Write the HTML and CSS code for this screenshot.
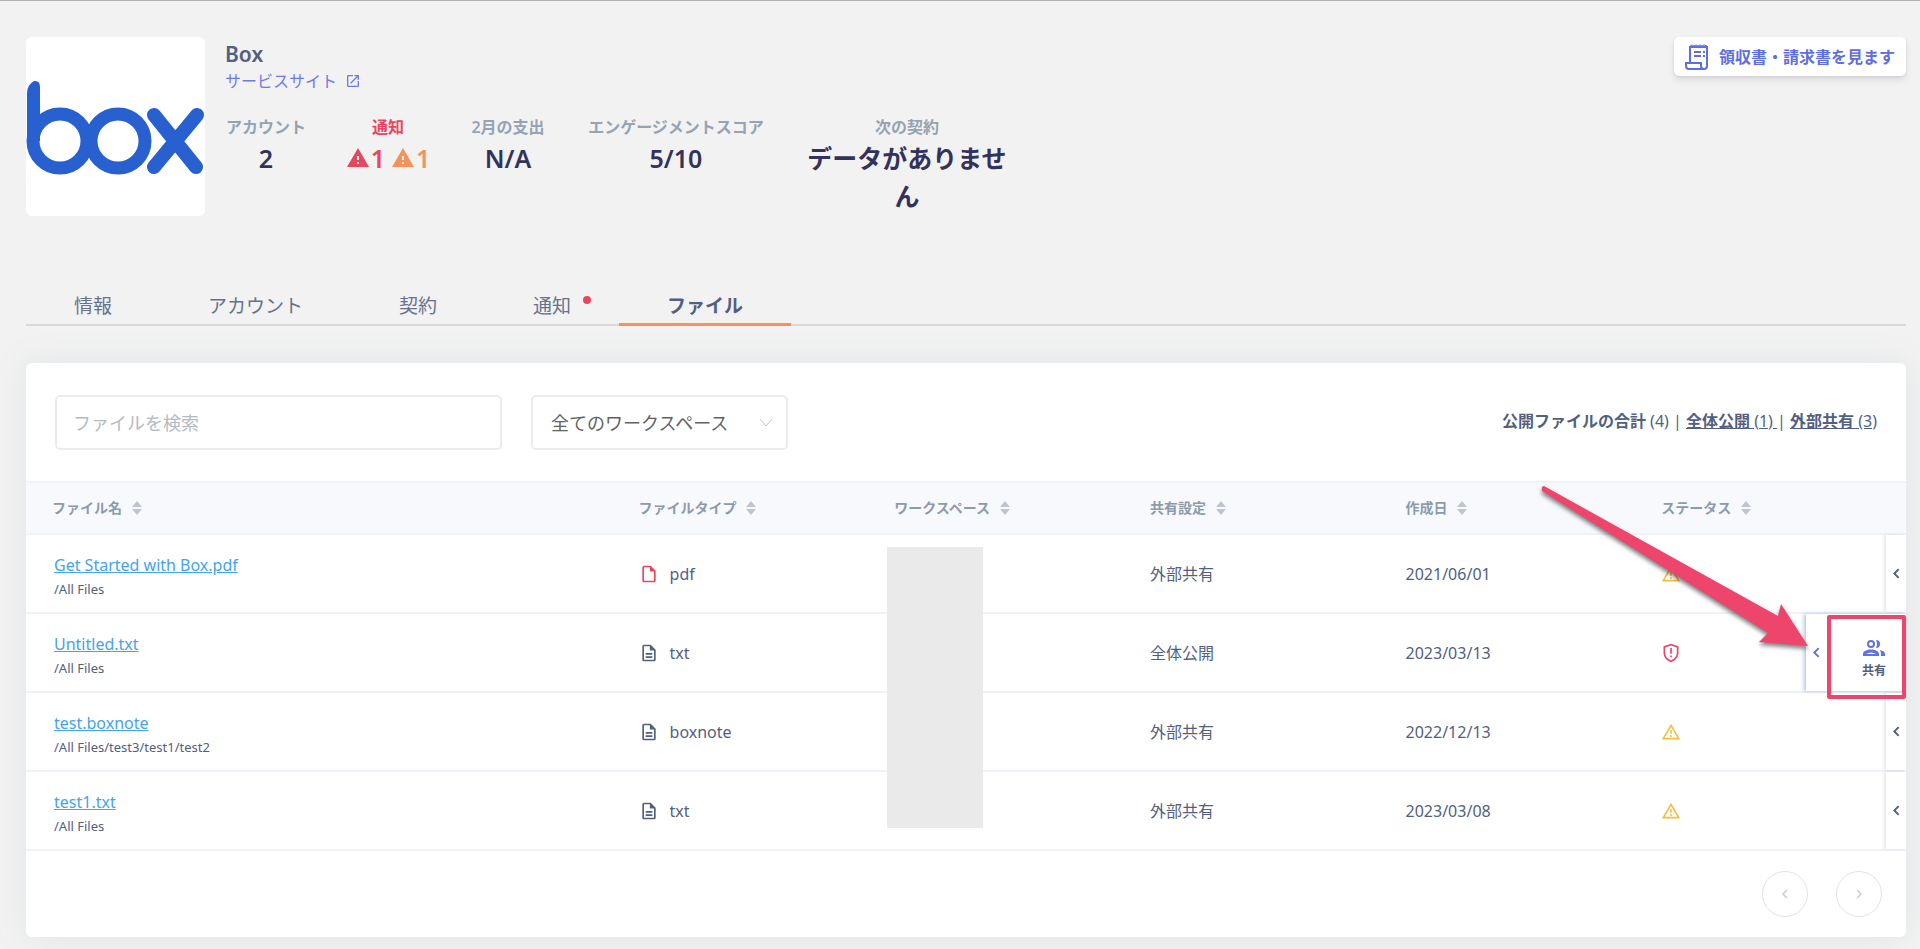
FILE: index.html
```html
<!DOCTYPE html>
<html lang="ja">
<head>
    <meta charset="UTF-8">
    <meta name="viewport" content="width=device-width, initial-scale=1.0">
    <title>Box</title>
    <link rel="stylesheet" href="styles.css">
</head>
<body>
<!-- shared icons -->
<svg class="sprite" aria-hidden="true">
    <symbol id="i-file" viewBox="0 0 24 24"><path d="M14 2H6c-1.100 0-1.990.9-1.990 2L4 20c0 1.100.89 2 1.990 2H18c1.100 0 2-.9 2-2V8l-6-6zM6 20V4h7v5h5v11H6z"/></symbol>
    <symbol id="i-doc" viewBox="0 0 24 24"><path d="M8 16h8v2H8zm0-4h8v2H8zm6-10H6c-1.100 0-2 .9-2 2v16c0 1.100.89 2 1.990 2H18c1.100 0 2-.9 2-2V8l-6-6zm4 18H6V4h7v5h5v11z"/></symbol>
    <symbol id="i-warn" viewBox="0 0 24 24"><path d="M1 21h22L12 2 1 21zm12-3h-2v-2h2v2zm0-4h-2v-4h2v4z"/></symbol>
    <symbol id="i-warn-o" viewBox="0 0 24 24"><path d="M12 6l7.500 13h-15L12 6m0-4L1 21h22L12 2zm1 14h-2v2h2v-2zm0-6h-2v4h2v-4z"/></symbol>
    <symbol id="i-shield" viewBox="0 0 24 24"><path d="M12 1L3 4v7.500c0 5.600 3.800 9.900 9 11.500 5.200-1.600 9-5.900 9-11.500V4l-9-3zm7 10.500c0 4.500-2.900 7.900-7 9.400-4.100-1.500-7-4.900-7-9.400V5.500l7-2.400 7 2.400v6zM11 6h2v7h-2zm0 9h2v2h-2z"/></symbol>
    <symbol id="i-left" viewBox="0 0 24 24"><path d="M16 4l-8 8 8 8" fill="none" stroke="currentColor" stroke-width="3.500"/></symbol>
    <symbol id="i-right" viewBox="0 0 24 24"><path d="M8 4l8 8-8 8" fill="none" stroke="currentColor" stroke-width="3.500"/></symbol>
    <symbol id="i-sort" viewBox="0 0 10 14"><path d="M5 0l5 6H0zM0 8h10l-5 6z"/></symbol>
</svg>

<div class="page">
    <header class="top">
        <div class="logo">
            <svg viewBox="0 0 179 179" aria-label="box" role="img">
                <path d="M1 104V56q0-8 7-12 6-1 6 6v54z" fill="#2860d0"/>
                <g fill="none" stroke="#2860d0" stroke-linecap="round">
                    <circle cx="34" cy="104" r="27" stroke-width="13"/>
                    <circle cx="92" cy="104" r="27" stroke-width="13"/>
                    <path d="M128 78l42 52M171 78l-43 52" stroke-width="14"/>
                </g>
            </svg>
        </div>
        <div class="service">
            <h1>Box</h1>
            <a class="site" href="#">サービスサイト
                <svg viewBox="0 0 24 24"><path d="M19 19H5V5h7V3H5c-1.100 0-2 .9-2 2v14c0 1.100.9 2 2 2h14c1.100 0 2-.9 2-2v-7h-2v7zM14 3v2h3.600L7.800 14.800l1.400 1.400L19 6.400V10h2V3h-7z"/></svg>
            </a>
            <div class="stats">
                <div class="stat"><span>アカウント</span><b>2</b></div>
                <div class="stat alert"><span>通知</span>
                    <b><i class="red"><svg><use href="#i-warn"/></svg>1</i><i class="orange"><svg><use href="#i-warn"/></svg>1</i></b>
                </div>
                <div class="stat"><span>2月の支出</span><b>N/A</b></div>
                <div class="stat"><span>エンゲージメントスコア</span><b>5/10</b></div>
                <div class="stat"><span>次の契約</span><b>データがありません</b></div>
            </div>
        </div>
        <button class="invoice" type="button">
            <svg viewBox="0 0 24 26" fill="none" stroke="currentColor" stroke-width="2">
                <path d="M5 18V3h17v19a3 3 0 0 1-3 3H4a3 3 0 0 1-3-3v-3h15v3a3 3 0 0 0 3 3"/>
                <path d="M5 2l2-1 2 1 2-1 2 1 2-1 2 1 2-1 3 1" stroke-width="1"/>
                <path d="M9 8h7M9 12h7M18 8h2M18 12h2"/>
            </svg>
            領収書・請求書を見ます
        </button>
    </header>

    <nav class="tabs">
        <a href="#">情報</a>
        <a href="#">アカウント</a>
        <a href="#">契約</a>
        <a href="#" class="has-dot">通知</a>
        <a href="#" class="active">ファイル</a>
    </nav>

    <main class="card">
        <div class="filters">
            <input type="text" placeholder="ファイルを検索" aria-label="ファイルを検索">
            <div class="select">
                <select aria-label="ワークスペース">
                    <option>全てのワークスペース</option>
                </select>
                <svg viewBox="0 0 14 10"><path d="M1 1l6 7 6-7" fill="none" stroke="currentColor"/></svg>
            </div>
            <p class="summary"><b>公開ファイルの合計</b> (4) | <a href="#"><b>全体公開</b> (1) </a>| <a href="#"><b>外部共有</b> (3)</a></p>
        </div>

        <table>
            <thead>
                <tr>
                    <th class="name">ファイル名 <svg><use href="#i-sort"/></svg></th>
                    <th class="col">ファイルタイプ <svg><use href="#i-sort"/></svg></th>
                    <th class="col">ワークスペース <svg><use href="#i-sort"/></svg></th>
                    <th class="col">共有設定 <svg><use href="#i-sort"/></svg></th>
                    <th class="col">作成日 <svg><use href="#i-sort"/></svg></th>
                    <th>ステータス <svg><use href="#i-sort"/></svg></th>
                </tr>
            </thead>
            <tbody>
                <tr>
                    <td class="name"><a href="#">Get Started with Box.pdf</a><small>/All Files</small></td>
                    <td><span class="type"><svg class="red"><use href="#i-file"/></svg>pdf</span></td>
                    <td></td>
                    <td>外部共有</td>
                    <td>2021/06/01</td>
                    <td class="status"><svg class="yellow"><use href="#i-warn-o"/></svg>
                        <div class="drawer"><button type="button" aria-label="開く"><svg><use href="#i-left"/></svg></button></div></td>
                </tr>
                <tr>
                    <td class="name"><a href="#">Untitled.txt</a><small>/All Files</small></td>
                    <td><span class="type"><svg><use href="#i-doc"/></svg>txt</span></td>
                    <td></td>
                    <td>全体公開</td>
                    <td>2023/03/13</td>
                    <td class="status"><svg class="red"><use href="#i-shield"/></svg>
                        <div class="drawer open">
                            <button type="button" aria-label="閉じる"><svg><use href="#i-left"/></svg></button>
                            <button type="button" class="share">
                                <svg viewBox="0 0 22 16"><circle cx="8" cy="4" r="3" fill="none" stroke="currentColor" stroke-width="2"/><path d="M13 0a4 4 0 0 1 0 8q2-4 0-8zM0 16v-2c0-6 16-6 16 0v2zM17 10q5 1 5 4v2h-4v-2q0-2-1-4z"/><path d="M3 14q5-3 10 0z" fill="#fff"/></svg>
                                共有
                            </button>
                        </div></td>
                </tr>
                <tr>
                    <td class="name"><a href="#">test.boxnote</a><small>/All Files/test3/test1/test2</small></td>
                    <td><span class="type"><svg><use href="#i-doc"/></svg>boxnote</span></td>
                    <td></td>
                    <td>外部共有</td>
                    <td>2022/12/13</td>
                    <td class="status"><svg class="yellow"><use href="#i-warn-o"/></svg>
                        <div class="drawer"><button type="button" aria-label="開く"><svg><use href="#i-left"/></svg></button></div></td>
                </tr>
                <tr>
                    <td class="name"><a href="#">test1.txt</a><small>/All Files</small></td>
                    <td><span class="type"><svg><use href="#i-doc"/></svg>txt</span></td>
                    <td></td>
                    <td>外部共有</td>
                    <td>2023/03/08</td>
                    <td class="status"><svg class="yellow"><use href="#i-warn-o"/></svg>
                        <div class="drawer"><button type="button" aria-label="開く"><svg><use href="#i-left"/></svg></button></div></td>
                </tr>
            </tbody>
        </table>

        <div class="pager">
            <button type="button" aria-label="前へ"><svg><use href="#i-left"/></svg></button>
            <button type="button" aria-label="次へ"><svg><use href="#i-right"/></svg></button>
        </div>

        <!-- annotations drawn over the table -->
        <div class="mask"></div>
        <svg class="arrow" viewBox="0 0 270 170"><path d="M3 3L237 133l3-12 27 42-49-4 9-9L1 8q-1-5 2-5z"/></svg>
        <div class="highlight"></div>
    </main>
</div>
</body>
</html>
```
FILE: styles.css
```css
* {
    box-sizing: border-box;
}
body {
    margin: 0;
    min-height: 100vh;
    background: #f2f2f2;
    border-top: 1px solid #b0b0b0;
    color: #525f7f;
    font-family: "Noto Sans", "Noto Sans CJK JP", sans-serif;
    font-size: 16px;
    line-height: 24px;
}
button, input, select {
    font: inherit;
    color: inherit;
}
button {
    border: 0;
    padding: 0;
    background: none;
    cursor: pointer;
}
svg {
    fill: currentColor;
}
.sprite {
    position: absolute;
    width: 0;
    height: 0;
}
.red {
    color: #e8455f;
}
.orange {
    color: #f5925c;
}
.yellow {
    color: #f5bd41;
}
.page {
    padding: 36px 14px 12px 26px;
}

/* service header */
.top {
    display: flex;
    align-items: flex-start;
    height: 247px;
}
.logo {
    display: flex;
    align-items: center;
    width: 179px;
    height: 179px;
    background: #fff;
    border-radius: 6px;
}
.logo svg {
    width: 100%;
}
.service {
    flex: 1;
    margin-left: 20px;
}
h1 {
    margin: 4px 0 0;
    font-size: 21px;
    line-height: 26px;
    font-weight: 600;
}
.site {
    display: flex;
    align-items: center;
    gap: 8px;
    line-height: 28px;
    color: #7079e8;
    text-decoration: none;
}
.site svg {
    width: 16px;
    height: 16px;
}
.stats {
    display: grid;
    grid-template-columns: 82px 84px 78px 180px 204px;
    column-gap: 39px;
    margin-top: 20px;
    text-align: center;
}
.stat span {
    display: block;
    color: #95a3b3;
    font-weight: 600;
    white-space: nowrap;
}
.stat b {
    display: block;
    color: #32325d;
    font-size: 25px;
    line-height: 38px;
    font-weight: 600;
}
.stat.alert span {
    color: #e8455f;
}
.stat.alert b {
    display: flex;
    justify-content: center;
    gap: 6px;
}
.stat i {
    display: flex;
    align-items: center;
    gap: 1px;
    font-style: normal;
}
.stat i svg {
    width: 24px;
    height: 24px;
}
.invoice {
    display: flex;
    align-items: center;
    gap: 10px;
    height: 39px;
    padding: 0 11px;
    border-radius: 5px;
    background: #fff;
    color: #5e6ee0;
    font-weight: 700;
    box-shadow: 0 4px 6px rgba(50, 50, 93, .11), 0 1px 3px rgba(0, 0, 0, .08);
}
.invoice svg {
    width: 24px;
    height: 26px;
    fill: none;
}

/* tabs */
.tabs {
    display: flex;
    border-bottom: 2px solid #d9d9d9;
}
.tabs a {
    margin-bottom: -2px;
    padding: 8px 48px 3px;
    border-bottom: 3px solid transparent;
    color: #66718c;
    font-size: 19px;
    line-height: 28px;
    text-decoration: none;
}
.tabs .active {
    border-color: #f5925c;
    color: #525f7f;
    font-weight: 700;
}
.tabs .has-dot {
    position: relative;
}
.has-dot::after {
    content: "";
    position: absolute;
    top: 12px;
    right: 28px;
    width: 8px;
    height: 8px;
    border-radius: 50%;
    background: #e8455f;
}

/* files */
.card {
    position: relative;
    margin-top: 37px;
    background: #fff;
    border-radius: 6px;
    box-shadow: 0 0 32px rgba(136, 152, 170, .15);
}
.filters {
    display: flex;
    align-items: center;
    gap: 29px;
    padding: 32px 29px 31px;
}
.filters input, .filters select {
    height: 55px;
    border: 2px solid #e9ecef;
    border-radius: 5px;
    background: #fff;
    font-size: 18px;
}
.filters input {
    width: 447px;
    padding: 0 16px;
}
.filters input::placeholder {
    color: #b3bac3;
}
.select {
    position: relative;
}
.select select {
    width: 257px;
    padding: 0 18px;
    appearance: none;
    color: #606266;
}
.select svg {
    position: absolute;
    top: 23px;
    right: 15px;
    width: 14px;
    height: 10px;
    color: #c0c4cc;
    pointer-events: none;
}
.summary {
    margin: 0 0 4px auto;
}
.summary a {
    color: inherit;
}
table {
    width: 100%;
    table-layout: fixed;
    border-collapse: collapse;
}
th, td {
    padding: 0 0 0 26px;
    text-align: left;
    border-bottom: 2px solid #f1f2f7;
}
th {
    height: 52px;
    background: #f7f9fc;
    border-top: 2px solid #f0f2f6;
    color: #8c9bac;
    font-size: 14px;
    font-weight: 700;
}
th.name {
    width: 31.2%;
}
th.col {
    width: 13.6%;
}
th svg {
    width: 10px;
    height: 14px;
    margin-left: 6px;
    vertical-align: -2px;
    color: #c0c4cc;
}
td {
    height: 79px;
}
td.name {
    padding: 6px 0 0 28px;
}
td.name a {
    display: block;
    color: #45a3ee;
}
td.name small {
    display: block;
    font-size: 13px;
}
.type {
    display: flex;
    align-items: center;
    gap: 11px;
}
.type svg {
    width: 20px;
    height: 20px;
}
.status {
    position: relative;
}
.status > svg {
    display: block;
    width: 20px;
    height: 20px;
}
.drawer {
    position: absolute;
    top: 0;
    right: 0;
    bottom: 0;
    display: flex;
    background: #fff;
    box-shadow: -2px 0 3px rgba(0, 0, 0, .1);
}
.drawer button {
    width: 20px;
}
.drawer button svg {
    display: block;
    width: 13px;
    height: 13px;
    margin: 0 auto;
}
.drawer.open {
    box-shadow: -2px 0 4px rgba(60, 110, 190, .4);
    color: #5e72e4;
}
.drawer .share {
    width: 80px;
    padding: 16px 0 0 16px;
    color: #525f7f;
    font-size: 12px;
    line-height: 20px;
    font-weight: 700;
}
.drawer .share svg {
    width: 22px;
    height: 16px;
    margin-bottom: 5px;
    color: #5e72e4;
}
.pager {
    display: flex;
    justify-content: flex-end;
    gap: 28px;
    padding: 20px 24px;
}
.pager button {
    width: 46px;
    height: 46px;
    border: 1px solid #dfe3e6;
    border-radius: 50%;
    color: #ccd1d6;
}
.pager svg {
    display: block;
    width: 12px;
    height: 12px;
    margin: 0 auto;
}

/* annotations */
.mask {
    position: absolute;
    top: 184px;
    left: 45.8%;
    width: 96px;
    height: 281px;
    background: #eaeaea;
}
.arrow {
    position: absolute;
    top: 120px;
    right: 95px;
    width: 270px;
    height: 170px;
    color: #ee456d;
    filter: drop-shadow(0 3px 2px rgba(0, 0, 0, .5));
    pointer-events: none;
}
.highlight {
    position: absolute;
    top: 252px;
    right: 0;
    width: 79px;
    height: 84px;
    border: 4px solid #ee456d;
    border-radius: 2px;
    pointer-events: none;
}
```
